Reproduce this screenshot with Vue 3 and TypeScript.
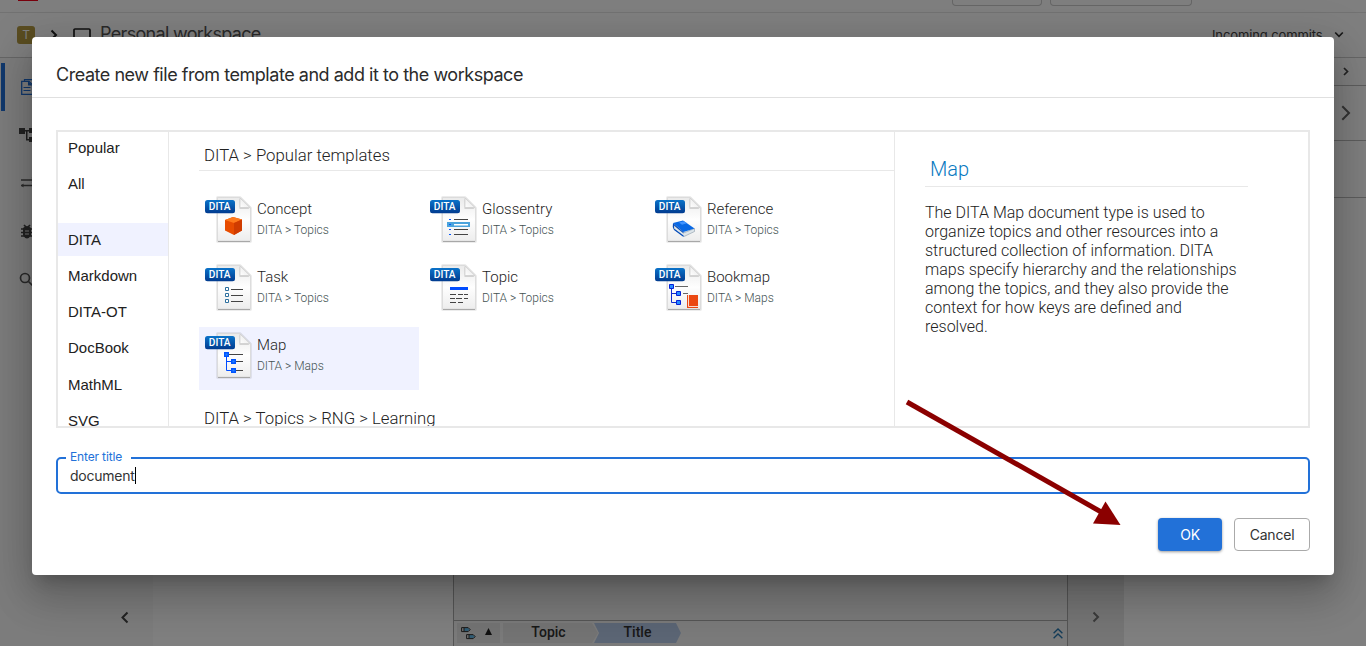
<script setup lang="ts">
interface Template {
  name: string
  path: string
  kind: string
}

const primary: string[] = ['Popular', 'All']
const categories: string[] = ['DITA', 'Markdown', 'DITA-OT', 'DocBook', 'MathML', 'SVG']
const templates: Template[] = [
  { name: 'Concept', path: 'DITA > Topics', kind: 'concept' },
  { name: 'Glossentry', path: 'DITA > Topics', kind: 'gloss' },
  { name: 'Reference', path: 'DITA > Topics', kind: 'reference' },
  { name: 'Task', path: 'DITA > Topics', kind: 'task' },
  { name: 'Topic', path: 'DITA > Topics', kind: 'topic' },
  { name: 'Bookmap', path: 'DITA > Maps', kind: 'bookmap' },
  { name: 'Map', path: 'DITA > Maps', kind: 'map' },
]
const description: string[] = [
  'The DITA Map document type is used to',
  'organize topics and other resources into a',
  'structured collection of information. DITA',
  'maps specify hierarchy and the relationships',
  'among the topics, and they also provide the',
  'context for how keys are defined and',
  'resolved.',
]
</script>

<template>
  <div class="screen">
    <div class="page">
      <div class="topbar">
        <span class="logo"></span>
        <span class="pill first"></span>
        <span class="pill second"></span>
      </div>
      <header class="crumbs">
        <span class="avatar">T</span>
        <svg class="crumb-arrow" width="8" height="12" viewBox="0 0 8 12"><path d="M1.5 1.5 6 6 1.5 10.500" fill="none" stroke="#222" stroke-width="2" /></svg>
        <svg class="crumb-box" width="18" height="16" viewBox="0 0 18 16"><rect x="1" y="1" width="16" height="14" rx="1" fill="none" stroke="#222" stroke-width="1.700" /></svg>
        <span class="ws">Personal workspace</span>
        <span class="commits">Incoming commits</span>
        <svg width="10" height="8" viewBox="0 0 10 8"><path d="M1.200 1.500 5 5.300 8.800 1.500" fill="none" stroke="#333" stroke-width="1.700" /></svg>
      </header>
      <div class="body">
        <nav class="rail">
          <div class="rail-item active">
            <svg width="16" height="18" viewBox="0 0 16 18"><path d="M3.500 3V1.600h7.500l3 3V14" fill="none" stroke="#2271d8" stroke-width="1.200" /><path d="M.700 3.300h7.300l3.500 3.500v9.500H.700z" fill="#fcfcfc" stroke="#2271d8" stroke-width="1.300" /><path d="M7 3.300V7.500h4.500z" fill="#2271d8" /><path d="M2.500 9.500h7M2.500 12.500h7" stroke="#2271d8" stroke-width="1.200" /></svg>
          </div>
          <div class="rail-item">
            <svg width="18" height="18" viewBox="0 0 18 18"><path d="M0 2h6v6H0zM10 2h7v5h-7zM10 11h7v5h-7zM6 4h4v1.500H8.500V13H10v1.500H7V5.500H6z" fill="#444" /></svg>
          </div>
          <div class="rail-item">
            <svg class="swap" width="16" height="12" viewBox="0 0 16 12" fill="none" stroke="#555" stroke-width="1.300"><path d="M1 3h14M12 .5 14.500 3 12 5.500M15 8.500H1" /><path d="M3.500 6.500 1 8.500l2.500 2z" fill="#555" stroke="none" /></svg>
          </div>
          <div class="rail-item bug">
            <svg width="16" height="16" viewBox="0 0 16 16"><path d="M4 4.500Q7 1.500 10 4.500V11Q7 16 4 11z" fill="#444" stroke="#444" stroke-width="2" /><path d="M1 5h12M1 8.500h12M1 12h12M4 1l2 2M10 1 8 3" stroke="#444" stroke-width="1.700" /><path d="M5 7h4M5 10h4" stroke="#eee" stroke-width="1.200" /></svg>
          </div>
          <div class="rail-item search">
            <svg width="16" height="16" viewBox="0 0 16 16" fill="none" stroke="#555" stroke-width="1.700"><circle cx="6" cy="6" r="4.500" /><path d="m9.500 9.500 5 5" /></svg>
          </div>
          <svg class="fold" width="9" height="13" viewBox="0 0 9 13"><path d="M7.500 1.500 2.500 6.500l5 5" fill="none" stroke="#444" stroke-width="2" /></svg>
        </nav>
        <div class="tree"></div>
        <section class="editor">
          <div class="canvas"></div>
          <footer class="path">
            <span class="path-menu">
              <svg width="15" height="13" viewBox="0 0 15 13"><path d="M3 1h4l2 1.500L7 4.200H3zM8 8h4l2 1.500-2 1.700H8z" fill="#62b8e8" /><path d="M.6.6h6.600l2 2-2 2H.6zM3 .6v4M5.600 7.600h6.600l2 2-2 2H5.600zM8 7.600v4" fill="none" stroke="#333" stroke-width="1" /></svg>
              <svg class="tri" width="7" height="7" viewBox="0 0 7 7"><path d="M3.500 0 7 7H0z" fill="#222" /></svg>
            </span>
            <span class="seg topic">Topic</span>
            <span class="seg title">Title</span>
            <svg class="up" width="10" height="11" viewBox="0 0 10 11" fill="none" stroke="#2878b0" stroke-width="1.400"><path d="M.6 5.200 5 1l4.400 4.200M.6 10.200 5 6l4.400 4.200" /></svg>
          </footer>
        </section>
        <aside class="strip">
          <svg width="8" height="12" viewBox="0 0 8 12"><path d="M1.500 1.500 6 6l-4.500 4.500" fill="none" stroke="#777" stroke-width="2" /></svg>
        </aside>
        <aside class="side">
          <div class="s1"><svg width="6" height="9" viewBox="0 0 6 9"><path d="M1 1l3.500 3.500L1 8" fill="none" stroke="#444" stroke-width="1.700" /></svg></div>
          <div class="s2"><svg width="10" height="16" viewBox="0 0 10 16"><path d="M1.300 1.300 8 8l-6.700 6.700" fill="none" stroke="#666" stroke-width="2" /></svg></div>
          <div class="s3"></div>
        </aside>
      </div>
    </div>

    <div class="backdrop">
      <div class="dialog" role="dialog">
        <h2 class="dialog-title"><span>Create new file from template and add it to the workspace</span></h2>
        <div class="chooser">
          <ul class="cats">
            <li v-for="c in primary" :key="c">{{ c }}</li>
            <li v-for="(c, i) in categories" :key="c" class="cat" :class="{ picked: i === 0 }">{{ c }}</li>
          </ul>
          <div class="list">
            <h3><span>DITA &gt; Popular templates</span></h3>
            <div class="grid">
              <div v-for="t in templates" :key="t.name" class="card" :class="{ chosen: t.kind === 'map' }">
                <svg class="doc" width="48" height="48" viewBox="0 0 48 48">
                  <defs>
                    <linearGradient :id="'p-' + t.kind" x1="0" y1="0" x2="0" y2="1"><stop offset="0" stop-color="#eaeaea" /><stop offset=".5" stop-color="#fefefe" /><stop offset="1" stop-color="#ededed" /></linearGradient>
                    <linearGradient :id="'b-' + t.kind" x1="0" y1="0" x2="0" y2="1"><stop offset="0" stop-color="#0b73c9" /><stop offset="1" stop-color="#013b8f" /></linearGradient>
                    <linearGradient :id="'f-' + t.kind" x1="0" y1="1" x2="1" y2="0"><stop offset="0" stop-color="#fff" /><stop offset="1" stop-color="#e2e2e2" /></linearGradient>
                  </defs>
                  <path d="M13.500 1.500h22.500l10.500 10.500v33.500h-33z" fill="none" stroke="#000" stroke-opacity=".1" stroke-width="2.500" stroke-linejoin="round" />
                  <path d="M13.500 1.500h22.500l10.500 10.500v33h-33z" :fill="`url(#p-${t.kind})`" stroke="#d8d8d8" stroke-width=".8" stroke-linejoin="round" />
                  <path d="M14 45.500h32" stroke="#a8a8a8" />
                  <path d="M35.500 3v10h10z" fill="#bbb" opacity=".6" />
                  <path d="M36 2v9.500h9.800z" :fill="`url(#f-${t.kind})`" stroke="#ccc" stroke-width=".7" />
                  <g v-if="t.kind === 'concept'">
                    <path d="m21 24 8-3 9 2.500v11L30 39l-9-4.500z" fill="#e84c00" /><path d="m21 24 8-3 9 2.500L30 27z" fill="#ff7a1c" /><path d="M30 27v12l8-4.500v-11z" fill="#d03c00" />
                  </g>
                  <g v-else-if="t.kind === 'gloss'">
                    <path d="M25 23.500h14M25 33.500h14M25 38.500h14" stroke="#444" />
                    <path d="M18 26h23v5H18z" fill="#4ba3dc" /><path d="M25 28h14v1.500H25z" fill="#fff" /><path d="M20 23.500h2M20 28.500h2M20 33.500h2M20 38.500h2" stroke="#0054ff" />
                  </g>
                  <g v-else-if="t.kind === 'reference'">
                    <path d="m19.500 29 10 8 11-4.500v3L30 40.500 20 33z" fill="#dde5ea" stroke="#8899a8" stroke-width=".6" />
                    <path d="m19 27 10-2.500 11.500 8L29.500 36z" fill="#0868e4" /><path d="m19 27 10.500 9v1.300L20 29.500v3l9.500 7v1.500L20 34q-2-3-1-7z" fill="#034cbc" /><path d="m25 26.500 5-1.200 3 2-5 1.400z" fill="#3f93ff" />
                  </g>
                  <g v-else-if="t.kind === 'task'">
                    <path d="M27 25.500h12M27 31.500h12M27 37.500h12" stroke="#444" /><path d="M21.500 23.500h3v3h-3zM21.500 29.500h3v3h-3zM21.500 35.500h3v3h-3z" fill="#fff" stroke="#2c6f9e" />
                  </g>
                  <g v-else-if="t.kind === 'topic'">
                    <path d="M21 23h18v3H21z" fill="#004cff" /><path d="M21 30.500h6M29 30.500h5M35 30.500h4M21 34.500h5M27 34.500h6M35 34.500h4M21 38.500h6M29 38.500h5" stroke="#444" />
                  </g>
                  <g v-else-if="t.kind === 'bookmap'">
                    <path d="M21 22.500h13M29 29.500h5" stroke="#666" /><path d="M17.500 23v15.500H26M17.500 29.500H26" fill="none" stroke="#102bd0" />
                    <path d="M15.500 20.500h4v4h-4zM22.500 27.500h4v4h-4zM22.500 36.500h4v4h-4z" fill="#268cff" stroke="#0520d8" /><path d="M33 31h11v13H33z" fill="#eb4812" /><path d="M34.500 31v11.500H44" fill="none" stroke="#fff" stroke-width=".8" />
                  </g>
                  <g v-else>
                    <path d="M25 22.500h14M32 29.500h7M32 38.500h7" stroke="#444" /><path d="M22.500 23v15.500H30M22.500 29.500H30" fill="none" stroke="#004cff" />
                    <path d="M20 20h5v5h-5zM27 27h5v5h-5zM27 36h5v5h-5z" fill="#0054ff" /><path d="M21.500 21.500h2v2h-2zM28.500 28.500h2v2h-2zM28.500 37.500h2v2h-2z" fill="#2484ff" />
                  </g>
                  <rect x="1" y="4" width="30" height="13.200" rx="2.500" :fill="`url(#b-${t.kind})`" />
                  <text x="4.800" y="14.200" textLength="21.800" lengthAdjust="spacingAndGlyphs" class="badge">DITA</text>
                </svg>
                <div class="card-text">
                  <b>{{ t.name }}</b>
                  <small>{{ t.path }}</small>
                </div>
              </div>
            </div>
            <h3 class="next"><span>DITA &gt; Topics &gt; RNG &gt; Learning</span></h3>
          </div>
          <div class="detail">
            <h4>Map</h4>
            <p><span v-for="line in description" :key="line">{{ line }}</span></p>
          </div>
        </div>
        <div class="field">
          <label>Enter title</label>
          <span class="value">document</span><i class="caret"></i>
        </div>
        <div class="actions">
          <button class="ok">OK</button>
          <button class="cancel">Cancel</button>
        </div>
      </div>
    </div>
    <svg class="pointer" width="220" height="130" viewBox="0 0 220 130">
      <path d="M2 4 198 115" stroke="#8b0000" stroke-width="5" /><path d="m215.500 127-15-23.500-12.500 22z" fill="#8b0000" />
    </svg>
  </div>
</template>

<style>
body { margin: 0; overflow: hidden; }
</style>

<style scoped>
* { box-sizing: border-box; }
svg { display: block; flex: none; }
.screen { position: relative; width: 1366px; height: 646px; overflow: hidden; background: #fff; font-family: Roboto, sans-serif; white-space: nowrap; }
.page { height: 646px; display: flex; flex-direction: column; }
.topbar { height: 13px; flex: none; display: flex; border-bottom: 1px solid #e4e4e4; }
.logo { width: 20px; height: 1px; margin-left: 18px; background: #f00018; }
.pill { height: 6px; border: 1px solid #ccc; border-top: 0; border-radius: 0 0 4px 4px; }
.first { width: 90px; margin-left: 914px; }
.second { width: 142px; margin-left: 8px; }
.crumbs { height: 45px; flex: none; display: flex; align-items: center; padding-left: 17px; border-bottom: 1px solid #ccc; font-family: Inter, sans-serif; }
.avatar { width: 18px; height: 18px; border-radius: 3px; background: #b49a42; color: #fff; font-size: 12px; line-height: 18px; text-align: center; }
.crumb-arrow { margin-left: 15px; }
.crumb-box { margin: 2px 0 0 15px; }
.ws { margin: -3px 0 0 9px; width: 1112px; font-size: 18px; letter-spacing: -.68px; color: #555; }
.commits { width: 112px; font-size: 13px; letter-spacing: -.12px; color: #444; }
.crumbs > svg:last-child { margin-left: 10px; }
.body { flex: 1; display: flex; min-height: 0; }
.rail { width: 153px; background: #f9f9f9; display: flex; flex-direction: column; padding-top: 5px; }
.rail-item { height: 48px; display: flex; align-items: center; padding-left: 19px; }
.swap { margin-left: 1px; }
.bug svg { margin: 2px 0 0 1px; }
.search svg { margin-top: 2px; }
.active { padding-left: 16px; border-left: 4px solid #2271d8; margin-left: 1px; }
.fold { margin: auto 0 22px 120px; }
.tree { width: 300px; }
.editor { width: 615px; border: solid #aaa; border-width: 0 1px; display: flex; flex-direction: column; }
.canvas { flex: 1; background: #f4f4f4; }
.path { height: 26px; border-top: 1px solid #aaa; display: flex; padding: 2px 0 3px 3px; background: #f5f5f5; }
.path-menu { width: 43px; height: 20px; background: #e7e7e7; display: flex; align-items: center; padding-left: 4px; gap: 9px; }
.tri { margin-top: -3px; }
.seg { font-size: 14px; font-weight: 500; line-height: 18px; height: 20px; color: #333; text-align: center; }
.topic { width: 95px; margin-left: 3px; padding-right: 4px; background: #e7e7e7; clip-path: polygon(0 0, 89px 0, 95px 50%, 89px 100%, 0 100%); }
.title { width: 88px; margin-left: -4px; padding-right: 1px; background: #b7cbe9; clip-path: polygon(0 0, 82px 0, 87px 50%, 82px 100%, 0 100%, 5px 50%); }
.up { margin: 5px 4px 0 auto; }
.strip { width: 56px; background: #ebebeb; display: flex; align-items: flex-end; padding: 0 0 23px 24px; }
.side { width: 242px; }
.side > div { display: flex; align-items: center; border-bottom: 1px solid #bbb; }
.s1 { height: 28px; padding-left: 219px; }
.s2 { height: 55px; padding-left: 217px; }
.s3 { height: 57px; }
.backdrop { position: absolute; inset: 0; padding: 37px 32px 0; background: rgba(0, 0, 0, .5); }
.dialog { height: 538px; background: #fff; border-radius: 4px; box-shadow: 0 11px 15px -7px rgba(0,0,0,.2), 0 24px 38px 3px rgba(0,0,0,.14), 0 9px 46px 8px rgba(0,0,0,.12); }
.dialog-title { height: 61px; margin: 0; padding: 24px 24px 0; border-bottom: 1px solid #e0e0e0; font: 400 18px/28px Inter, sans-serif; letter-spacing: -.465px; color: #2b2b2b; }
.chooser { height: 298px; margin: 32px 24px 0; border: 2px solid #e8e8e8; display: flex; overflow: hidden; }
.cats { width: 111px; flex: none; margin: 0; padding: 0; list-style: none; border-right: 1px solid #e8e8e8; font-family: "Liberation Sans", Arial, sans-serif; font-size: 15px; color: #212121; }
.cats li { height: 33px; line-height: 32px; padding-left: 10px; margin-bottom: 3.2px; }
.cats .cat { line-height: 34px; }
.cats .picked { margin-top: 21.600px; background: #f0f2ff; }
.list { width: 726px; flex: none; border-right: 1px solid #e8e8e8; padding-left: 30px; }
h3 { height: 39px; margin: 0 0 20px; padding: 8px 5px 0; border-bottom: 1px solid #e8e8e8; font-size: 16.750px; font-weight: 300; line-height: 31px; color: #222; }
.next { margin-top: 5px; height: 40px; }
.grid { display: grid; grid-template-columns: repeat(3, 220px); grid-auto-rows: 63px; gap: 5px; }
.card { display: flex; padding: 5px; }
.chosen { background: #f0f2ff; }
.card-text { margin-left: 5px; padding-top: 1px; display: flex; flex-direction: column; }
.card-text b { font-size: 15px; font-weight: 300; line-height: 24px; color: #1e1e1e; }
.card-text small { font-size: 12px; font-weight: 300; line-height: 19px; color: #435252; }
.badge { font: 500 10px Roboto, sans-serif; fill: #fff; }
.detail { padding: 20px 0 0 30px; }
h4 { width: 323px; height: 35px; margin: 0 0 16px; padding-left: 5px; border-bottom: 1px solid #e8e8e8; color: #0879bf; font-size: 20px; line-height: 35px; font-weight: 300; }
p { margin: 0; font-size: 16px; font-weight: 300; line-height: 19px; color: #222; }
p span { display: block; }
.field { position: relative; height: 37px; margin: 29px 24px 0; padding-left: 12px; border: 2px solid #2271d8; border-radius: 5px; display: flex; align-items: center; font-family: Inter, sans-serif; font-size: 14px; color: #333; }
.value { letter-spacing: -.25px; }
.field label { position: absolute; left: 8px; top: -10px; width: 65px; height: 15px; padding-left: 4px; background: #fff; color: #2271d8; font-size: 12px; line-height: 15px; letter-spacing: -.15px; }
.caret { width: 1px; height: 17px; background: #000; }
.actions { display: flex; justify-content: flex-end; gap: 12px; margin: 24px 24px 0; }
button { height: 33px; padding: 0; border-radius: 4px; font: 400 14px Inter, sans-serif; letter-spacing: -.2px; }
.ok { width: 64px; border: 0; background: #2271d8; color: #fff; box-shadow: 0 1px 3px rgba(0,0,0,.4); }
.cancel { width: 76px; border: 1px solid #aaa; background: #fff; color: #333; }
.pointer { position: absolute; left: 905px; top: 398px; }
</style>
